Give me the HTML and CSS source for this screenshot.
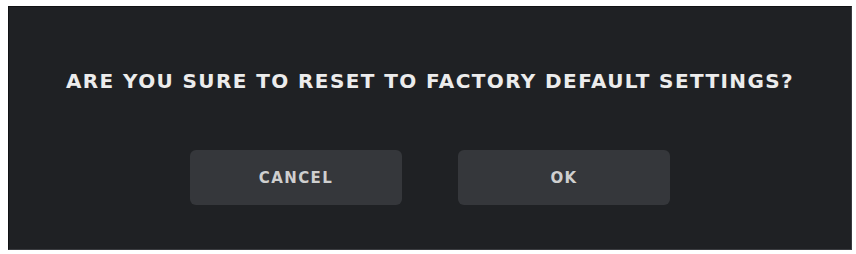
FILE: index.html
```html
<!DOCTYPE html>
<html>
<head>
<meta charset="utf-8">
<link rel="stylesheet" href="styles.css">
</head>
<body>
<div class="dialog">
  <h1 class="title">ARE YOU SURE TO RESET TO FACTORY DEFAULT SETTINGS?</h1>
  <div class="actions">
    <button class="btn">CANCEL</button>
    <button class="btn">OK</button>
  </div>
</div>
</body>
</html>
```
FILE: styles.css
```css
html, body {
  margin: 0;
  padding: 0;
  background: #ffffff;
}
body {
  padding: 6px 4px 4px 8px;
  width: 856px;
  height: 254px;
  box-sizing: border-box;
}
.dialog {
  width: 844px;
  height: 244px;
  box-sizing: border-box;
  background: #1f2124;
  border: 1px solid #3a3c40;
  border-left-color: #111214;
  border-top-color: #111214;
  display: flex;
  flex-direction: column;
  align-items: center;
  font-family: "DejaVu Sans", "Liberation Sans", sans-serif;
}
.title {
  margin: 62px 0 0 0;
  font-size: 20px;
  line-height: 24px;
  font-weight: bold;
  letter-spacing: 1.4px;
  color: #ececec;
  white-space: nowrap;
}
.actions {
  display: flex;
  gap: 56px;
  margin-top: 57px;
}
.btn {
  width: 212px;
  height: 55px;
  border: none;
  border-radius: 6px;
  background: #35373b;
  color: #cfcfcf;
  font-family: "DejaVu Sans", "Liberation Sans", sans-serif;
  font-size: 15px;
  font-weight: bold;
  letter-spacing: 1.4px;
  padding: 0;
}
```
